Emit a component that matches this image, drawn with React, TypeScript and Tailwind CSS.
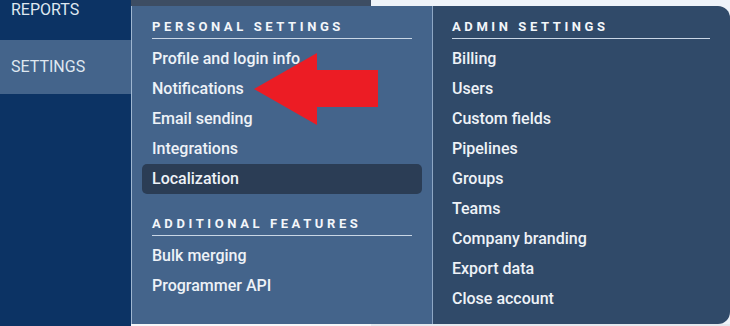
import React from 'react';

const personal = ['Profile and login info', 'Notifications', 'Email sending', 'Integrations', 'Localization'];
const extra = ['Bulk merging', 'Programmer API'];
const admin = [
  'Billing',
  'Users',
  'Custom fields',
  'Pipelines',
  'Groups',
  'Teams',
  'Company branding',
  'Export data',
  'Close account',
];

function Heading({ children }: { children: React.ReactNode }) {
  return (
    <div className="h-[33px] flex flex-col justify-end">
      <div className="text-[13px] font-bold tracking-[3.6px] text-[#f3f6fa] leading-[16px] pb-[3px]">{children}</div>
      <div className="h-px bg-[#c9d6e5]" />
    </div>
  );
}

function Item({ label, active = false }: { label: string; active?: boolean }) {
  return (
    <div
      className={
        'h-[30px] flex items-center text-[16px] font-medium text-[#eef2f7] ' +
        (active ? 'bg-[#2b3d55] rounded-[5px] -mx-[10px] px-[10px]' : '')
      }
    >
      {label}
    </div>
  );
}

export default function App() {
  return (
    <div
      className="w-[730px] h-[326px] flex overflow-hidden relative bg-[#eef3f9]"
      style={{ fontFamily: 'Roboto, "Liberation Sans", sans-serif' }}
    >
      <div className="w-[131px] bg-[#0c3364] text-[16px] text-[#dfe7f0]">
        <div className="h-[40px] pl-[11px] leading-[20px]">REPORTS</div>
        <div className="h-[54px] pl-[11px] bg-[#44648b] flex items-center">SETTINGS</div>
      </div>

      <div className="flex-1 flex flex-col">
        <div className="h-[6px] flex">
          <div className="w-[240px] bg-[#3d4d63]" />
          <div className="flex-1 bg-[#eef3f9]" />
        </div>

        <div className="h-[318px] flex">
          <div className="w-[301px] bg-[#44648b] border-l border-[#9fb6d0] pl-[20px] pr-[20px]">
            <Heading>PERSONAL SETTINGS</Heading>
            <div className="pt-[5px]">
              {personal.map((p) => (
                <Item key={p} label={p} active={p === 'Localization'} />
              ))}
            </div>
            <div className="pt-[9px]">
              <Heading>ADDITIONAL FEATURES</Heading>
            </div>
            <div className="pt-[5px]">
              {extra.map((p) => (
                <Item key={p} label={p} />
              ))}
            </div>
          </div>

          <div className="flex-1 bg-[#304a69] border-l border-[#8ea7c4] rounded-r-[12px] pl-[19px] pr-[20px]">
            <Heading>ADMIN SETTINGS</Heading>
            <div className="pt-[5px]">
              {admin.map((p) => (
                <Item key={p} label={p} />
              ))}
            </div>
          </div>
        </div>

        <div className="h-[2px] flex">
          <div className="w-[240px] bg-[#f5f7fa]" />
          <div className="flex-1 bg-[#e4e9ef]" />
        </div>
      </div>

      <svg className="absolute left-0 top-0 pointer-events-none" width="730" height="326">
        <polygon
          points="254,89 317,53 317,70 378,70 378,107 317,107 317,125"
          fill="#ec1c24"
        />
      </svg>
    </div>
  );
}
